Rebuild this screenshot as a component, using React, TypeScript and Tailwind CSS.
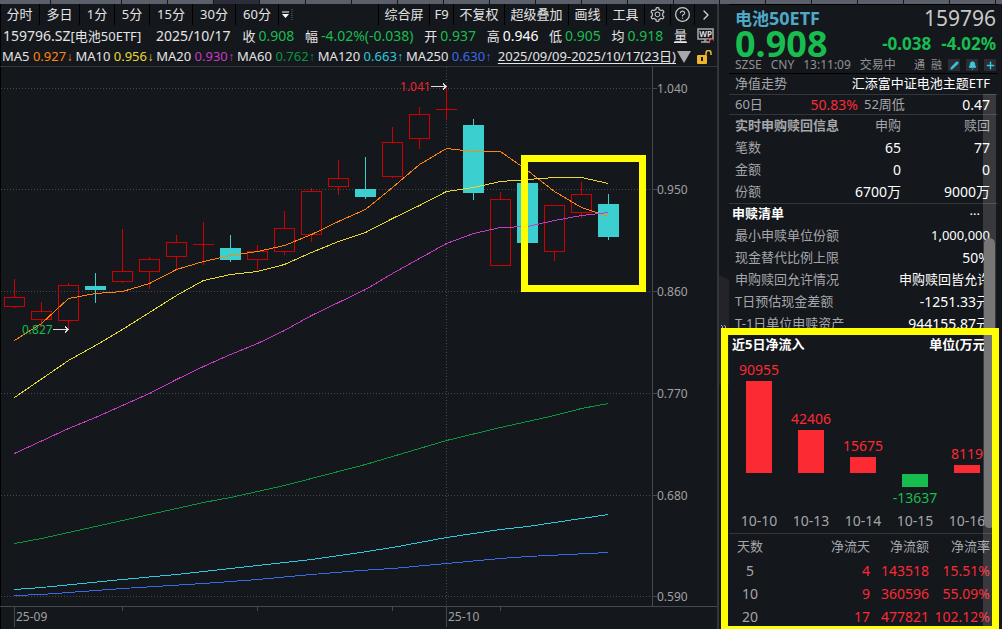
import { Fragment } from 'react';
import { AiOutlineQuestionCircle, AiOutlineSetting } from 'react-icons/ai';
import { Bell, ChevronRight, Pencil, Plus } from 'lucide-react';

const periods = [
    { label: '分时', width: 'w-10' },
    { label: '多日', width: 'w-10' },
    { label: '1分', width: 'w-[35px]' },
    { label: '5分', width: 'w-[35px]' },
    { label: '15分', width: 'w-[43px]' },
    { label: '30分', width: 'w-[43px]' },
    { label: '60分', width: 'w-[43px]' },
];

const tools = [
    { label: '综合屏', width: 'w-[51px]' },
    { label: 'F9', width: 'w-6' },
    { label: '不复权', width: 'w-[51px]' },
    { label: '超级叠加', width: 'w-16' },
    { label: '画线', width: 'w-[38px]' },
    { label: '工具', width: 'w-[38px]' },
];

const quotes = [
    { label: '收', value: '0.908', color: 'text-[#18bd50]' },
    { label: '幅', value: '-4.02%(-0.038)', color: 'text-[#18bd50]' },
    { label: '开', value: '0.937', color: 'text-[#18bd50]' },
    { label: '高', value: '0.946', color: 'text-white' },
    { label: '低', value: '0.905', color: 'text-[#18bd50]' },
    { label: '均', value: '0.918', color: 'text-[#18bd50]' },
];

const averages = [
    { label: 'MA5', value: '0.927', arrow: '↓', color: 'text-[#ff8410]' },
    { label: 'MA10', value: '0.956', arrow: '↓', color: 'text-[#e8d838]' },
    { label: 'MA20', value: '0.930', arrow: '↑', color: 'text-[#c43bc4]' },
    { label: 'MA60', value: '0.762', arrow: '↑', color: 'text-[#0a9640]' },
    { label: 'MA120', value: '0.663', arrow: '↑', color: 'text-[#2fc8dc]' },
    { label: 'MA250', value: '0.630', arrow: '↑', color: 'text-[#3c6ae6]' },
];

const gridLines = [
    { y: 88, label: '1.040' },
    { y: 189, label: '0.950' },
    { y: 291, label: '0.860' },
    { y: 393, label: '0.770' },
    { y: 495, label: '0.680' },
    { y: 596, label: '0.590' },
];

// [x, wick top, body top, body bottom, wick bottom, falling]
const candles: [number, number, number, number, number, boolean][] = [
    [14, 279, 297, 307, 308, false],
    [41, 302, 311, 320, 325, false],
    [68, 283, 285, 321, 329, false],
    [95, 273, 286, 290, 303, true],
    [122, 229, 271, 282, 283, false],
    [149, 257, 259, 272, 289, false],
    [176, 235, 242, 257, 269, false],
    [203, 222, 244, 245, 265, false],
    [230, 235, 248, 260, 262, true],
    [257, 245, 251, 260, 270, false],
    [284, 211, 228, 252, 255, false],
    [311, 188, 191, 235, 242, false],
    [338, 160, 178, 187, 195, false],
    [365, 157, 189, 197, 199, true],
    [392, 127, 142, 177, 178, false],
    [419, 107, 114, 139, 149, false],
    [446, 87, 109, 110, 120, false],
    [473, 119, 125, 193, 200, true],
    [500, 192, 199, 266, 266, false],
    [527, 183, 183, 243, 243, true],
    [554, 205, 205, 252, 261, false],
    [581, 182, 194, 213, 218, false],
    [608, 194, 204, 237, 240, true],
];

const lines = [
    { color: '#ff8410', points: '14,340 41,323 68,298 95,293 122,291 149,283 176,269 203,261 230,255 257,251 284,245 311,234 338,221 365,209 392,187 419,164 446,148 473,151 500,151 527,170 554,191 581,207 608,216' },
    { color: '#e8d838', points: '14,397 68,360 95,345 122,329 149,312 176,295 203,280 230,274 257,271 284,264 311,252 338,241 365,232 392,218 419,205 446,191 473,187 500,181 527,179 554,177 581,177 608,183' },
    { color: '#c43bc4', points: '14,453 68,428 95,417 122,405 149,393 176,379 203,366 230,354 257,343 284,330 311,315 365,289 392,273 419,258 446,243 473,233 500,227 527,226 554,220 581,215 608,212' },
    { color: '#0a9640', points: '14,543 41,538 68,532 122,520 203,502 230,497 284,485 365,464 446,440 500,427 554,415 581,408 608,403' },
    { color: '#2fc8dc', points: '14,589 41,587 122,579 176,574 257,565 311,559 360,552 392,547 446,537 500,529 527,526 608,514' },
    { color: '#3c6ae6', points: '14,595 41,594 122,588 203,583 257,579 311,574 360,570 392,568 446,563 500,558 527,556 608,552' },
];

const realtime = [
    { label: '笔数', buy: '65', sell: '77' },
    { label: '金额', buy: '0', sell: '0' },
    { label: '份额', buy: '6700万', sell: '9000万' },
];

const redemption = [
    { label: '最小申赎单位份额', value: '1,000,000', size: 'text-[13px]' },
    { label: '现金替代比例上限', value: '50%', size: 'text-sm' },
    { label: '申购赎回允许情况', value: '申购赎回皆允许', size: 'text-[13px]' },
    { label: 'T日预估现金差额', value: '-1251.33元', size: 'text-sm' },
    { label: 'T-1日单位申赎资产', value: '944155.87元', size: 'text-sm' },
];

const inflow = [
    { date: '10-10', value: 90955 },
    { date: '10-13', value: 42406 },
    { date: '10-14', value: 15675 },
    { date: '10-15', value: -13637 },
    { date: '10-16', value: 8119 },
];

const totals = [
    { days: '5', inDays: '4', amount: '143518', rate: '15.51%' },
    { days: '10', inDays: '9', amount: '360596', rate: '55.09%' },
    { days: '20', inDays: '17', amount: '477821', rate: '102.12%' },
];

const BAR_MAX = 92;

function barHeight(value: number) {
    return Math.round((Math.abs(value) / 90955) * BAR_MAX);
}

function TopStrip() {
    return (
        <div className="flex h-1 overflow-hidden bg-[#5a5f69]">
            <div className="w-[51px] shrink-0 border-r border-[#14171c]" />
            <div className="w-[71px] shrink-0 border-r border-[#14171c]" />
            {Array.from({ length: 20 }, (_, i) => (
                <div key={i} className={`w-[46px] shrink-0 border-r border-[#14171c] ${i === 2 ? 'bg-[#2b2e38]' : ''}`} />
            ))}
        </div>
    );
}

function Toolbar() {
    return (
        <nav className="flex h-[21px] text-[13px] leading-[21px]">
            {periods.map((p) => (
                <button key={p.label} className={`${p.width} border-r border-black text-center whitespace-nowrap`}>{p.label}</button>
            ))}
            <button aria-label="更多周期" className="flex w-4 items-center justify-center">
                <svg width="12" height="12" viewBox="0 0 12 12">
                    <path d="M1 3h7" stroke="#fff" />
                    <path d="M1 5h7L4.500 9z" fill="#fff" />
                    <path d="M11 0v12" stroke="#666" strokeDasharray="1 1" />
                </svg>
            </button>
            <div className="flex-1 border-r border-black" />
            {tools.map((t) => (
                <button key={t.label} className={`${t.width} border-r border-black text-center whitespace-nowrap`}>{t.label}</button>
            ))}
            <button aria-label="设置" className="flex w-[26px] items-center justify-center border-r border-black">
                <AiOutlineSetting size={17} color="#c8c8c8" />
            </button>
            <button aria-label="帮助" className="flex w-6 items-center justify-center border-r border-black">
                <AiOutlineQuestionCircle size={17} color="#c8c8c8" />
            </button>
            <button aria-label="展开" className="flex w-[22px] items-center justify-center">
                <ChevronRight size={16} color="#d0d0d0" strokeWidth={2} />
            </button>
        </nav>
    );
}

function QuoteRow() {
    return (
        <div className="flex h-[22px] items-center pl-[3px] pr-0.5 text-sm whitespace-nowrap">
            <span className="w-[153px]">159796.SZ<span className="text-[13px]">[电池50ETF]</span></span>
            <span className="mr-3">2025/10/17</span>
            <div className="flex flex-1 justify-between">
                {quotes.map((q) => (
                    <span key={q.label}>
                        <span className="mr-[3px] text-[13px]">{q.label}</span>
                        <span className={q.color}>{q.value}</span>
                    </span>
                ))}
                <a href="#volume" className="text-[13px] underline underline-offset-2">量</a>
            </div>
            <svg className="ml-2.5" width="18" height="16" viewBox="0 0 18 16">
                <path d="M1 1h15v10H1zM8 11v3M4 14h9" fill="none" stroke="#aaa" strokeWidth="1.5" />
                <text x="8.5" y="9" fontSize="8" fontWeight="700" textAnchor="middle" fill="#ddd">WP</text>
                <path d="M9 13l2-2 2 2 2-2 2 2" stroke="#d22" fill="none" />
            </svg>
        </div>
    );
}

function AverageRow() {
    return (
        <div className="flex h-5 items-center border-b border-[#33363b] pl-0.5 pr-1 text-[13px] whitespace-nowrap">
            <div className="flex gap-0.5">
                {averages.map((a) => (
                    <span key={a.label}>
                        {a.label}{' '}
                        <span className={a.color}>
                            {a.value}
                            <span className="font-['Liberation_Mono',monospace] text-xs">{a.arrow}</span>
                        </span>
                    </span>
                ))}
            </div>
            <a href="#range" className="ml-auto underline underline-offset-2">2025/09/09-2025/10/17(23日)</a>
            <svg className="ml-px shrink-0" width="14" height="13" viewBox="0 0 14 13">
                <path d="M0 1h14L7 13z" fill="#a8a8a8" />
            </svg>
            <svg className="ml-1.5 shrink-0" width="16" height="14" viewBox="0 0 16 14">
                <rect x="0" y="5" width="10" height="9" rx="1" fill="#f0b429" />
                <path d="M9 5V3a2.5 2.5 0 0 1 5 0v2" fill="none" stroke="#f0b429" strokeWidth="1.5" />
                <path d="M5 7v4" stroke="#14171c" strokeWidth="2" />
            </svg>
        </div>
    );
}

function CandleChart() {
    return (
        <svg className="block w-full" viewBox="0 67 717 562" fontSize="12" shapeRendering="crispEdges">
            <g stroke="#45484d" strokeDasharray="1 2">
                {gridLines.map((g) => (
                    <path key={g.y} d={`M1 ${g.y + 0.5}H652`} />
                ))}
                <path d="M446.5 67V606" />
            </g>
            <path d="M652.5 67V606M0 606.5H717M14.5 606V627M446.5 606V627M122.5 606v5M257.5 606v5M392.5 606v5M500.5 606v5" stroke="#45484d" fill="none" />
            {gridLines.map((g) => (
                <Fragment key={g.y}>
                    <path d={`M652 ${g.y + 0.5}h5`} stroke="#45484d" />
                    <text x="657" y={g.y + 5} fill="#a0a0a0">{g.label}</text>
                </Fragment>
            ))}
            <text x="16" y="621" fill="#a0a0a0">25-09</text>
            <text x="448" y="621" fill="#a0a0a0">25-10</text>

            {candles.map(([x, high, top, bottom, low, falling]) =>
                falling ? (
                    <g key={x} fill="#3ccfcf">
                        <rect x={x} y={high} width="1" height={low - high} />
                        <rect x={x - 10} y={top} width="21" height={bottom - top} />
                    </g>
                ) : (
                    <g key={x} stroke="#d00000" fill="none">
                        <path d={`M${x + 0.5} ${high}V${top}M${x + 0.5} ${bottom}V${low}`} />
                        {bottom - top > 1 ? (
                            <rect x={x - 9.5} y={top + 0.5} width="20" height={bottom - top - 1} />
                        ) : (
                            <path d={`M${x - 10} ${top + 0.5}h21`} />
                        )}
                    </g>
                )
            )}
            {lines.map((l) => (
                <polyline key={l.color} points={l.points} transform="translate(0.5 0.5)" fill="none" stroke={l.color} />
            ))}

            {/* High and low markers */}
            <text x="400" y="91" fill="#f0222c">1.041</text>
            <path d="M431 86.5h15M443 83.5l3 3-3 3" stroke="#ddd" fill="none" />
            <text x="22" y="334" fill="#18bd50">0.827</text>
            <path d="M53 329.5h15M65 326.5l3 3-3 3" stroke="#ddd" fill="none" />

            <rect x="524.5" y="158.5" width="118" height="130" fill="none" stroke="#ffff00" strokeWidth="7" />
        </svg>
    );
}

function QuoteHeader() {
    return (
        <header className="h-[70px] border-y border-black pl-1.5 pr-0.5 text-[#18bd50]">
            <div className="flex h-[26px] items-center justify-between">
                <h1 className="text-[17px] leading-5 font-bold text-[#4fa9c6]">电池<span className="text-lg leading-5">50ETF</span></h1>
                <span className="text-[21px] leading-[26px] text-[#c8c8c8]">159796</span>
            </div>
            <div className="flex h-[26px] items-center justify-between font-bold">
                <span className="text-4xl leading-[26px]">0.908</span>
                <span className="flex gap-2.5 text-[17px]"><span>-0.038</span><span>-4.02%</span></span>
            </div>
            <div className="flex h-4 items-center text-xs text-[#909296] whitespace-nowrap">
                <span className="mr-[9px]">SZSE</span>
                <span className="mr-[9px]">CNY</span>
                <span className="mr-[9px]">13:11:09</span>
                <span>交易中</span>
                <span className="ml-auto flex items-center gap-1.5 text-[11px]">
                    <span>通</span>
                    <span>融</span>
                    <button aria-label="编辑" className="flex size-3 items-center justify-center bg-[#2a2d33]"><Pencil size={9} color="#3cc8dc" fill="#3cc8dc" /></button>
                    <button aria-label="提醒" className="flex size-3 items-center justify-center bg-[#2a2d33]"><Bell size={9} color="#3cc8dc" fill="#3cc8dc" /></button>
                    <button aria-label="添加" className="flex size-3 items-center justify-center bg-[#2a2d33]"><Plus size={11} color="#3cc8dc" strokeWidth={3} /></button>
                </span>
            </div>
        </header>
    );
}

function FundDetails() {
    return (
        <section className="h-[254px] overflow-hidden text-[13px] text-[#a4a6aa] whitespace-nowrap">
            <div className="flex h-[21px] items-center justify-between border-b border-[#33363b] pl-1.5 pr-2">
                <span>净值走势</span>
                <span className="text-white">汇添富中证电池主题ETF</span>
            </div>
            <div className="flex h-5 items-center border-b border-[#33363b] pl-1.5 pr-2">
                <span>60日</span>
                <span className="ml-auto text-sm text-[#fb2a33]">50.83%</span>
                <span className="ml-1.5 w-20">52周低</span>
                <span className="w-[46px] text-right text-sm text-white">0.47</span>
            </div>
            <table className="w-full table-fixed border-b border-[#33363b]">
                <thead>
                    <tr className="h-[22px]">
                        <th className="w-[114px] py-0 pl-1.5 text-left font-bold">实时申购赎回信息</th>
                        <th className="py-0 text-right font-normal">申购</th>
                        <th className="w-[97px] py-0 pr-2 text-right font-normal">赎回</th>
                    </tr>
                </thead>
                <tbody>
                    {realtime.map((r) => (
                        <tr key={r.label} className="h-[22px]">
                            <td className="py-0 pl-1.5">{r.label}</td>
                            <td className="py-0 text-right text-sm text-white">{r.buy}</td>
                            <td className="py-0 pr-2 text-right text-sm text-white">{r.sell}</td>
                        </tr>
                    ))}
                </tbody>
            </table>
            <div className="flex h-[21px] items-center justify-between pl-[3px] pr-[18px] text-white">
                <h2 className="font-bold">申赎清单</h2>
                <button aria-label="更多" className="leading-4">···</button>
            </div>
            <dl>
                {redemption.map((r) => (
                    <div key={r.label} className="flex h-[22px] items-center justify-between pl-1.5 pr-2">
                        <dt>{r.label}</dt>
                        <dd className={`${r.size} text-white`}>{r.value}</dd>
                    </div>
                ))}
            </dl>
        </section>
    );
}

function NetInflow() {
    return (
        <section className="flex-1 pt-[7px] text-[13px] text-[#a4a6aa] whitespace-nowrap">
            <div className="flex h-5 items-center justify-between pl-[3px] pr-2 font-bold text-white">
                <h2>近5日净流入</h2>
                <span>单位(万元)</span>
            </div>
            <div className="flex pl-1 text-sm">
                {inflow.map((d) => (
                    <div key={d.date} className="flex w-[52px] shrink-0 flex-col items-center">
                        <div className="flex h-[118px] flex-col items-center justify-end text-[#fb2a33]">
                            {d.value > 0 && (
                                <>
                                    <span className="leading-[22px]">{d.value}</span>
                                    <div className="w-[26px] bg-[#fb2a33]" style={{ height: barHeight(d.value) }} />
                                </>
                            )}
                        </div>
                        <div className="flex h-9 flex-col items-center pt-px text-[#18bd50]">
                            {d.value < 0 && (
                                <>
                                    <div className="w-[26px] bg-[#18bd50]" style={{ height: barHeight(d.value) }} />
                                    <span className="leading-[22px]">{d.value}</span>
                                </>
                            )}
                        </div>
                        <span className="h-6 leading-6">{d.date}</span>
                    </div>
                ))}
            </div>
            <table className="w-full table-fixed border-t border-[#33363b]">
                <thead>
                    <tr className="h-[26px]">
                        <th className="w-[42px] py-0 text-center font-normal">天数</th>
                        <th className="py-0 text-right font-normal">净流天</th>
                        <th className="w-[59px] py-0 text-right font-normal">净流额</th>
                        <th className="w-[69px] py-0 pr-2 text-right font-normal">净流率</th>
                    </tr>
                </thead>
                <tbody className="text-sm text-[#fb2a33]">
                    {totals.map((t) => (
                        <tr key={t.days} className="h-[23px]">
                            <td className="py-0 text-center text-[#a4a6aa]">{t.days}</td>
                            <td className="py-0 text-right">{t.inDays}</td>
                            <td className="py-0 text-right">{t.amount}</td>
                            <td className="py-0 pr-2 text-right">{t.rate}</td>
                        </tr>
                    ))}
                </tbody>
            </table>
        </section>
    );
}

export default function App() {
    return (
        <div className="min-h-screen overflow-hidden bg-[#14171c] font-['Noto_Sans','Noto_Sans_CJK_SC',sans-serif] text-[#e4e4e4]">
            <TopStrip />
            <div className="flex">
                <main className="min-w-0 flex-1 shadow-[inset_1px_0_0_#000]">
                    <Toolbar />
                    <QuoteRow />
                    <AverageRow />
                    <CandleChart />
                </main>

                {/* Panel splitter */}
                <div className="flex w-3 shrink-0 flex-col border-l-2 border-[#33363b] bg-[#14171c]">
                    <svg className="mt-[271px]" width="10" height="110" viewBox="0 0 10 110">
                        <path d="M0 0l10 5v105H0z" fill="#23242a" />
                        <path d="M2 50l2 2-2 2M5 50l2 2-2 2" stroke="#aaa" fill="none" />
                    </svg>
                </div>

                <aside className="relative flex w-[273px] shrink-0 flex-col">
                    <div className="flex flex-1 flex-col pr-1">
                        <QuoteHeader />
                        <FundDetails />
                        <NetInflow />
                    </div>

                    {/* Scrollbar */}
                    <div className="absolute top-[90px] right-[6px] bottom-0 w-[13px] bg-white/15">
                        <div className="ml-px mt-[144px] h-[290px] w-[11px] rounded-md bg-[#767676]" />
                    </div>
                    {/* Highlight frame, its lower edge runs off the window */}
                    <div className="pointer-events-none absolute top-[324px] right-[3px] -bottom-1 -left-2 border-[7px] border-[#ffff00]" />
                </aside>
            </div>
        </div>
    );
}
